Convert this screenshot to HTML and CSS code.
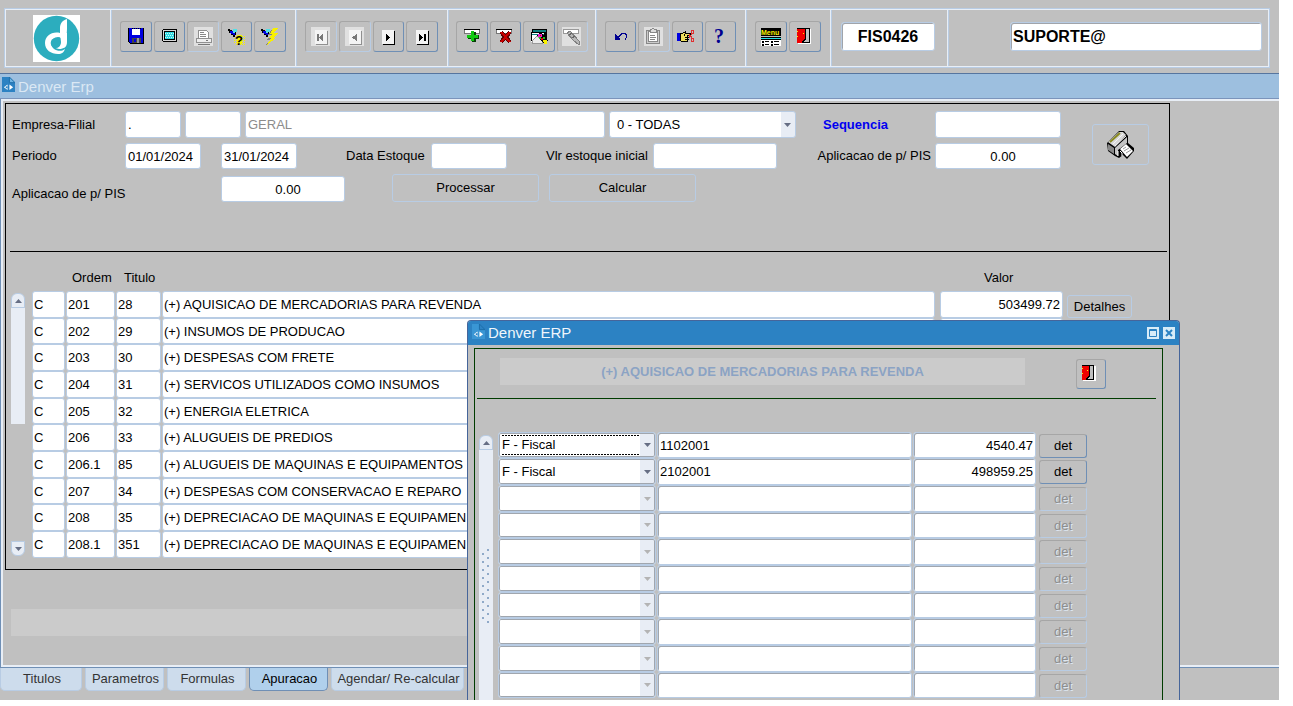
FILE: index.html
```html
<!DOCTYPE html>
<html lang="pt-br">
	<head>
		<meta charset="utf-8" />
		<title>Denver Erp</title>
		<link rel="stylesheet" href="styles.css">
	</head>

	<body>
		<div class="app">

			<header class="toolbar">
				<div class="section logo">
					<svg width="47" height="47" viewBox="0 0 47 47" aria-label="Denver">
						<rect width="47" height="47" fill="#fff"/>
						<circle cx="23.500" cy="23.500" r="22.700" fill="#2cadbe"/>
						<path fill="#fff" d="M34 4C30 5 27 8 27 13V18C19 16 12 21 12 28C12 35 18 39 25 39C29 39 31 37 32 34C27 38 19 35 18 29C18 25 21 22 25 22C28 22 29 24 30 27C33 23 34 19 34 14Z"/>
						<path fill="#fff" d="M27 18H34V27C34 32 31 34 26 34C25 34 23 33 23 33C26 33 28 30 28 27Z"/>
						<circle cx="22.500" cy="28" r="4.800" fill="#2cadbe"/>
					</svg>
				</div>
				<div class="section">
					<button class="tool" aria-label="Salvar">
						<svg class="icon" viewBox="0 0 20 20">
							<path d="M2 1H18V17H4L2 15Z" fill="#000"/>
							<path d="M3 1H17V16H4L3 15Z" fill="#0000e0"/>
							<path d="M6 2H14V8H6Z" fill="#fff"/>
							<path d="M6 1.500H15" stroke="#000" stroke-dasharray="1 1"/>
							<path d="M6 11H15V16H6Z" fill="#444"/>
							<path d="M8 12H10V15H8Z" fill="#0000e0"/>
							<path d="M11 11H13V16H11Z" fill="#999"/>
						</svg>
					</button>
					<button class="tool" aria-label="Tela">
						<svg class="icon" viewBox="0 0 20 20">
							<path d="M4 2H17L18 3V14L17 15H4L3 14V3Z" fill="#000"/>
							<path d="M4 3H17V14H4Z" fill="#d8d8d8"/>
							<path d="M5 4H16V13H5Z" fill="#000"/>
							<path d="M6 5H15V12H6Z" fill="#30d8e0"/>
							<path d="M6 6.500H15M7 8.500H15M6 10.500H15" stroke="#c8f8f8" stroke-dasharray="1 1"/>
						</svg>
					</button>
					<button class="tool" aria-label="Imprimir" disabled>
						<svg class="icon" viewBox="0 0 20 20">
							<path d="M1 0H20V19H1Z" fill="#e0e0e0"/>
							<path d="M5.500 3.500H13.500L15.500 5.500V11.500H5.500Z" fill="#fff" stroke="#909090"/>
							<path d="M7 5.500H11M7 7.500H13M7 9.500H13" stroke="#888"/>
							<path d="M3.500 11.500H18.500V15.500H3.500Z" fill="#eee" stroke="#909090"/>
							<path d="M5 17.500H17M13 13.500H15" stroke="#777"/>
						</svg>
					</button>
					<button class="tool" aria-label="Entrar consulta">
						<svg class="icon" viewBox="0 0 20 20">
							<path d="M7 9.500H18M7 11.500H18M7 13.500H18M7 15.500H18M9 17.500H18" stroke="#f8f000" stroke-width="1" stroke-dasharray="1 1"/>
							<path d="M10 8H15V17H10Z" fill="#f8f000"/>
							<path d="M1 2H3V3H5V4H8V2H10V5H9V8H8V10H6V8H4V6H2V4H1Z" fill="#000"/>
							<path d="M3 4H6V5H8V8H6V7H4V6H3Z" fill="#0000e0"/>
							<path d="M6 2H10V5H8V6H6Z" fill="#50e0e8"/>
							<text class="mark" x="8" y="18">?</text>
						</svg>
					</button>
					<button class="tool" aria-label="Executar consulta">
						<svg class="icon" viewBox="0 0 20 20">
							<path d="M1 2H3V3H5V4H8V2H10V5H9V8H8V10H6V8H4V6H2V4H1Z" fill="#000"/>
							<path d="M3 4H6V5H8V8H6V7H4V6H3Z" fill="#0000e0"/>
							<path d="M6 2H10V5H8V6H6Z" fill="#50e0e8"/>
							<path d="M12 2L8 8H11L7 13H10L6 18L14 12H11L16 7H13L16 2Z" fill="#808080"/>
							<path d="M13 1H18L14 6H18L13 11H16L7 18L11 11H8L12 7H10Z" fill="#f8f000"/>
						</svg>
					</button>
				</div>
				<div class="section">
					<button class="tool" aria-label="Primeiro" disabled>
						<svg class="icon" viewBox="0 0 20 20">
							<path d="M0 0H19V19H0Z" fill="#e0e0e0"/>
							<path d="M5 4H17V18H5Z" fill="#909090"/>
							<path d="M4 3H16V17H4Z" fill="#f4f4f4"/>
							<path d="M6 7H8V14H6ZM12 7V14L8 10.500Z" fill="#777"/>
						</svg>
					</button>
					<button class="tool" aria-label="Anterior" disabled>
						<svg class="icon" viewBox="0 0 20 20">
							<path d="M0 0H19V19H0Z" fill="#e0e0e0"/>
							<path d="M5 4H17V18H5Z" fill="#909090"/>
							<path d="M4 3H16V17H4Z" fill="#f4f4f4"/>
							<path d="M12 7V14L7 10.500Z" fill="#777"/>
						</svg>
					</button>
					<button class="tool" aria-label="Proximo">
						<svg class="icon" viewBox="0 0 20 20">
							<path d="M5 4H17V18H5Z" fill="#000"/>
							<path d="M4 3H16V17H4Z" fill="#f4f4f4"/>
							<path d="M8 7H9V8H10V9H11V10H12V11H11V12H10V13H9V14H8Z" fill="#000"/>
						</svg>
					</button>
					<button class="tool" aria-label="Ultimo">
						<svg class="icon" viewBox="0 0 20 20">
							<path d="M5 4H17V18H5Z" fill="#000"/>
							<path d="M4 3H16V17H4Z" fill="#f4f4f4"/>
							<path d="M7 7H8V8H9V9H10V10H11V11H10V12H9V13H8V14H7ZM12 7H14V14H12Z" fill="#000"/>
						</svg>
					</button>
				</div>
				<div class="section tight">
					<button class="tool" aria-label="Inserir registro">
						<svg class="icon" viewBox="0 0 20 20">
							<path d="M2.500 2.500H17.500V6.500H2.500Z" fill="#fff" stroke="#777"/>
							<path d="M2 2.500H18" stroke="#000"/>
							<path d="M10 5H14V8H17V12H14V15H10V12H6V8H10Z" fill="#064006"/>
							<path d="M9 4H12V8H16V11H12V14H9V11H5V8H9Z" fill="#10c810"/>
						</svg>
					</button>
					<button class="tool" aria-label="Apagar registro">
						<svg class="icon" viewBox="0 0 20 20">
							<path d="M1.500 2.500H16.500V6.500H1.500Z" fill="#fff" stroke="#777"/>
							<path d="M1 2.500H17" stroke="#000"/>
							<path d="M6 5L15 15M15 5L6 15" stroke="#600000" stroke-width="4"/>
							<path d="M6 5L15 15M15 5L6 15" stroke="#c80000" stroke-width="2"/>
						</svg>
					</button>
					<button class="tool" aria-label="Limpar registro">
						<svg class="icon" viewBox="0 0 20 20">
							<path d="M3 2H18V14H3Z" fill="#000"/>
							<path d="M4 3H17V5H4Z" fill="#108080"/>
							<path d="M2 5H15V15H2Z" fill="#fff"/>
							<path d="M2 5H16V6H2ZM2 6H3V14H2Z" fill="#000"/>
							<path d="M3 7H15V8H3Z" fill="#108080"/>
							<path d="M3 14L8 9L13 14V16H3Z" fill="#ececec" stroke="#999"/>
							<path d="M8 8L12 5L19 14L15 17Z" fill="#000"/>
							<path d="M9 7H13V10H9Z" fill="#f020d0"/>
							<path d="M10 10H12V12H10ZM14 10H16V12H14Z" fill="#20c020"/>
							<path d="M11 8H12V9H11ZM12 11H14V13H12Z" fill="#e00000"/>
							<path d="M14 13H18V17H15V15H14Z" fill="#f8f000"/>
						</svg>
					</button>
					<button class="tool" aria-label="Editar" disabled>
						<svg class="icon" viewBox="0 0 20 20">
							<path d="M0 0H19V19H0Z" fill="#e0e0e0"/>
							<path d="M1.500 2.500H16.500V6.500H1.500Z" fill="#fff" stroke="#999"/>
							<path d="M5 6L8 4L18 15L17 18L11 13Z" fill="#b8b8b8" stroke="#808080"/>
							<path d="M7 8L10 6M10 11L13 9" stroke="#666"/>
						</svg>
					</button>
				</div>
				<div class="section">
					<button class="tool" aria-label="Desfazer">
						<svg class="icon" viewBox="0 0 20 20">
							<path d="M4 7H5V8H6V9H7V10H8V11H9V13H4Z" fill="#000090"/>
							<path d="M7 10.500L9 8.500L11 6.500H14L15.500 8V10L14 12.500" stroke="#000090" fill="none"/>
						</svg>
					</button>
					<button class="tool" aria-label="Colar" disabled>
						<svg class="icon" viewBox="0 0 20 20">
							<path d="M0 0H19V19H0Z" fill="#e0e0e0"/>
							<path d="M2.500 3.500H15.500V16.500H2.500Z" fill="#ccc" stroke="#888"/>
							<path d="M4.500 4.500H13.500V14.500H4.500Z" fill="#fff" stroke="#888"/>
							<path d="M6 2H8L9 1L10 2H12V5H6Z" fill="#ddd" stroke="#888"/>
							<path d="M6 8.500H11M6 10.500H12M6 12.500H11" stroke="#888"/>
						</svg>
					</button>
					<button class="tool" aria-label="Lista">
						<svg class="icon" viewBox="0 0 20 20">
							<path d="M0 6H3V14H0Z" fill="#0000e0"/>
							<path d="M3.500 6.500H5.500L8.500 4.500V6.500H13.500V8.500H10.500V14.500H4.500L3.500 13.500Z" fill="#f0e060" stroke="#000"/>
							<path d="M7.500 7V9M8 10.500H12M8 12.500H12" stroke="#000"/>
							<path d="M14.500 3.500H16.500V6.500H14.500ZM14.500 11.500H16.500V14.500H14.500ZM12 11L15 7M12 7L15 11" fill="none" stroke="#e03030"/>
						</svg>
					</button>
					<button class="tool" aria-label="Ajuda">
						<svg class="icon" viewBox="0 0 20 20"><text class="help" x="4" y="16">?</text></svg>
					</button>
				</div>
				<div class="section">
					<button class="tool" aria-label="Menu">
						<svg class="icon" viewBox="0 0 20 20">
							<path d="M0 1H20V9H0Z" fill="#000"/>
							<text class="menu-word" x="0" y="8">Menu</text>
							<path d="M0 10H20V13H0Z" fill="#000"/>
							<path d="M0 11H20V12H0Z" fill="#20e0e8"/>
							<path d="M0 13H20V19H0Z" fill="#fff"/>
							<path d="M1 14H3V16H1ZM4 14H8V15H4ZM10 14H12V16H10ZM13 14H18V15H13ZM1 17H3V19H1ZM4 17H8V18H4ZM10 17H12V19H10ZM13 17H18V18H13Z" fill="#000"/>
						</svg>
					</button>
					<button class="tool" aria-label="Sair">
						<svg class="icon" viewBox="0 0 20 20">
							<path d="M3 2H16V17H3Z" fill="#fff"/>
							<path d="M2.500 1.500H14.500V15.500H2.500Z" fill="#c0c0c0" stroke="#000"/>
							<path d="M2 2H10V12L6 16H2Z" fill="#f00000"/>
							<path d="M10.500 2V12L7 15.500" stroke="#000" fill="none"/>
							<path d="M8 6H9V7H8ZM2 4H3V5H2ZM2 9H3V10H2Z" fill="#f8f000"/>
						</svg>
					</button>
				</div>
				<div class="section code-box">
					<input class="field head-field code" value="FIS0426" aria-label="Programa">
				</div>
				<div class="section user">
					<input class="field head-field" value="SUPORTE@" aria-label="Usuario">
				</div>
			</header>

			<div class="titlebar">
				<svg class="doc" viewBox="0 0 14 16">
					<path d="M0 0H8L14 6V16H0Z" fill="#2c82c3"/>
					<path d="M8 0L14 6H8Z" fill="#6fb4e4" stroke="#1b6ca8"/>
					<path d="M6 8L2 11L6 14ZM8 8L12 11L8 14Z" fill="#fff"/>
					<path d="M4 10H6V12H4Z" fill="#2c82c3"/>
				</svg>
				<span>Denver Erp</span>
			</div>

			<main class="canvas">
				<section class="frame">
					<form class="form">
						<div class="rows">
							<div class="row">
								<label class="lead" for="empresa">Empresa-Filial</label>
								<input class="field w56" id="empresa" value=".">
								<input class="field w56" aria-label="Filial">
								<input class="field grow muted" value="GERAL" aria-label="Nome">
								<select class="field combo todas" aria-label="Tipo"><option>0 - TODAS</option></select>
								<label class="seq" for="sequencia">Sequencia</label>
								<input class="field w126" id="sequencia">
							</div>
							<div class="row">
								<label class="lead" for="inicio">Periodo</label>
								<input class="field w76" id="inicio" value="01/01/2024">
								<input class="field w76 until" value="31/01/2024" aria-label="Periodo final">
								<label class="stock-date" for="estoque">Data Estoque</label>
								<input class="field w76" id="estoque">
								<label class="stock-value" for="vlr">Vlr estoque inicial</label>
								<input class="field w124" id="vlr">
								<label class="push" for="pis">Aplicacao de p/ PIS</label>
								<input class="field w126 center" id="pis" value="0.00">
							</div>
							<div class="row last">
								<label class="lead wide" for="aplicacao">Aplicacao de p/ PIS</label>
								<input class="field w124 center" id="aplicacao" value="0.00">
								<button type="button" class="flat first">Processar</button>
								<button type="button" class="flat">Calcular</button>
							</div>
						</div>
						<button type="button" class="print" aria-label="Imprimir apuracao">
							<svg width="30" height="30" viewBox="0 0 30 30">
								<path d="M1 13L13 1L18 1L22 6V13L28 18V21L21 29L17 25L13 28L9 26L2 21Z" fill="#000"/>
								<path d="M2 12L13 2L17 2L20 5L9 17Z" fill="#d8d8d8"/>
								<path d="M4 12L14 3" stroke="#8a8a20" stroke-width="2"/>
								<path d="M7 14L17 4M9 16L20 6" stroke="#f4f4f4"/>
								<path d="M2 14L8 18V24L2 20Z" fill="#888"/>
								<path d="M9 18L21 7V13L12 20V26L9 24Z" fill="#c4c4c4"/>
								<path d="M14 19L20 14L27 21L21 27Z" fill="#fff"/>
								<path d="M17 19L20 17M18 21L23 18M20 23L25 20" stroke="#999"/>
								<path d="M14 21L16 23V26M12 21V26" stroke="#fff" fill="none"/>
							</svg>
						</button>
					</form>

					<hr class="rule">

					<div class="list">
						<div class="scroll">
							<button class="cap up" aria-label="Subir"></button>
							<div class="track"></div>
							<button class="cap down" aria-label="Descer"></button>
						</div>
						<table class="entries">
							<thead>
								<tr>
									<th class="c-type"></th>
									<th class="c-order">Ordem</th>
									<th class="c-title">Titulo</th>
									<th></th>
									<th class="c-value">Valor</th>
									<th class="c-action"></th>
								</tr>
							</thead>
							<tbody id="entries"></tbody>
						</table>
					</div>
				</section>
				<div class="status"></div>
			</main>

			<nav class="tabs">
				<button class="tab t-titulos">Titulos</button>
				<button class="tab">Parametros</button>
				<button class="tab">Formulas</button>
				<button class="tab active">Apuracao</button>
				<button class="tab t-agendar">Agendar/ Re-calcular</button>
			</nav>

			<section class="modal">
				<div class="modal-bar">
					<svg class="doc" viewBox="0 0 14 16">
						<path d="M0 0H8L14 6V16H0Z" fill="#3a96d4"/>
						<path d="M8 0L14 6H8Z" fill="#2c82c3" stroke="#1b6ca8"/>
						<path d="M6 8L2 11L6 14ZM8 8L12 11L8 14Z" fill="#fff"/>
						<path d="M4 10H6V12H4Z" fill="#2c82c3"/>
					</svg>
					<span>Denver ERP</span>
					<button class="win first" aria-label="Maximizar">
						<svg width="12" height="12" viewBox="0 0 12 12"><path d="M2.500 2.500H9.500V9.500H2.500ZM2 3.500H10" fill="none" stroke="#2c82c3"/></svg>
					</button>
					<button class="win" aria-label="Fechar">
						<svg width="12" height="12" viewBox="0 0 12 12"><path d="M3 3L9 9M9 3L3 9" stroke="#2c82c3" stroke-width="2"/></svg>
					</button>
				</div>
				<div class="modal-body">
					<div class="modal-head">
						<div class="caption">(+) AQUISICAO DE MERCADORIAS PARA REVENDA</div>
						<button class="tool leave" aria-label="Sair da consulta">
							<svg class="icon" viewBox="0 0 20 20">
								<path d="M2 2H15V17H2Z" fill="#fff"/>
								<path d="M1.500 1.500H12.500V15.500H1.500Z" fill="#c0c0c0" stroke="#000"/>
								<path d="M1 2H8V12L4 16H1Z" fill="#f00000"/>
								<path d="M8.500 2V12L5 15.500" stroke="#000" fill="none"/>
								<path d="M6 6H7V7H6ZM1 4H2V5H1ZM1 9H2V10H1Z" fill="#f8f000"/>
							</svg>
						</button>
					</div>
					<hr class="rule green">
					<div class="modal-list">
						<div class="scroll">
							<button class="cap up" aria-label="Subir itens"></button>
							<div class="track full"><div class="grip"></div></div>
						</div>
						<table class="details">
							<tbody id="details"></tbody>
						</table>
					</div>
				</div>
			</section>
		</div>

		<script>
			var entries = [
				["201","28","(+) AQUISICAO DE MERCADORIAS PARA REVENDA","503499.72"],
				["202","29","(+) INSUMOS DE PRODUCAO",""],
				["203","30","(+) DESPESAS COM FRETE",""],
				["204","31","(+) SERVICOS UTILIZADOS COMO INSUMOS",""],
				["205","32","(+) ENERGIA ELETRICA",""],
				["206","33","(+) ALUGUEIS DE PREDIOS",""],
				["206.1","85","(+) ALUGUEIS DE MAQUINAS E EQUIPAMENTOS",""],
				["207","34","(+) DESPESAS COM CONSERVACAO E REPARO",""],
				["208","35","(+) DEPRECIACAO DE MAQUINAS E EQUIPAMEN",""],
				["208.1","351","(+) DEPRECIACAO DE MAQUINAS E EQUIPAMEN",""]
			];
			var details = [["1102001","4540.47"],["2102001","498959.25"]];

			function cell(value,label,cls,tdCls){
				return '<td class="' + (tdCls || '') + '"><input class="field ' + (cls || '') + '" value="' + value + '" aria-label="' + label + '"></td>';
			}

			document.getElementById("entries").innerHTML = entries.map(function (e,i){
				return '<tr>' + cell("C","Classe") + cell(e[0],"Ordem") + cell(e[1],"Titulo") + cell(e[2],"Descricao")
					+ cell(e[3],"Valor","right","value")
					+ '<td class="action">' + (i == 0 ? '<button class="flat detail">Detalhes</button>' : '') + '</td></tr>';
			}).join("");

			var html = "";
			for(var i = 0; i < 10; i++){
				var d = details[i];
				var off = d ? '' : ' disabled';
				html += '<tr><td class="d-kind"><select class="field combo' + (i == 0 ? ' current' : '') + '" aria-label="Origem"' + off + '>'
					+ '<option>' + (d ? 'F - Fiscal' : '') + '</option></select></td>'
					+ cell(d ? d[0] : '',"CFOP")
					+ cell(d ? d[1] : '',"Valor item","right","d-value")
					+ '<td class="d-action"><button class="tool det"' + off + '>det</button></td></tr>';
			}
			document.getElementById("details").innerHTML = html;
		</script>
	</body>
</html>
```
FILE: styles.css
```css
*{
	box-sizing: border-box;
}
body {
	margin: 0;
	background-color: #fff;
	font: 13px/16px "Liberation Sans", Arial, sans-serif;
	color: #000;
}
button, input, select {
	font: inherit;
	color: inherit;
	margin: 0;
	padding: 0;
}
svg {
	display: block;
}
.app {
	position: relative;
	display: flex;
	flex-direction: column;
	height: calc(100vh - 6px);
	margin-right: 14px;
	overflow: hidden;
	background-color: #c0c0c0;
}

/* toolbar */
.toolbar {
	display: grid;
	grid-template-columns: 104px 185px 152px 148px 150px 85px 117px 1fr;
	height: 60px;
	margin: 8px 9px 5px 4px;
	border: 1px solid #b8cce4;
	box-shadow: inset 0 0 0 1px #e8eef6;
	padding: 1px;
	flex: none;
}
.section {
	display: flex;
	align-items: flex-start;
	gap: 2px;
	padding: 11px 9px 0;
	border-left: 1px solid #e8eef6;
	box-shadow: inset 1px 0 #b8cce4;
}
.section.tight {
	padding: 11px 7px 0 8px;
}
.section.logo {
	padding: 5px 0 0 27px;
	border: 0;
	box-shadow: none;
}
.section.code-box {
	padding: 12px 12px 0 10px;
}
.section.user {
	padding: 12px 6px 0 62px;
}
.tool {
	display: flex;
	flex: 1;
	align-items: center;
	justify-content: center;
	height: 31px;
	background: none;
	border: 1px solid;
	border-color: #a6a6a6 #6f8fb5 #6f8fb5 #a6a6a6;
	border-radius: 3px;
}
.tool:disabled {
	border-color: #a6a6a6 #b8cce4 #b8cce4 #a6a6a6;
}
.icon {
	flex: none;
	width: 20px;
	height: 20px;
	shape-rendering: crispEdges;
}
.mark {
	font: bold 13px "Liberation Sans", sans-serif;
}
.help {
	font: bold 20px "Liberation Serif", serif;
	fill: #000090;
}
.menu-word {
	font: bold 7px "Liberation Sans", sans-serif;
	fill: #f8f000;
}

/* fields */
.field {
	height: 26px;
	min-width: 0;
	padding: 0 2px;
	background-color: #fff;
	border: 1px solid #b8cce4;
	border-radius: 3px;
	outline: none;
}
.head-field {
	flex: 1;
	height: 29px;
	font-size: 16px;
	font-weight: bold;
	box-shadow: inset 1px 1px #a0a4aa;
}
.code {
	text-align: center;
}
.combo {
	appearance: none;
	padding: 0 18px 0 3px;
	background-image:
		url("data:image/svg+xml,%3Csvg xmlns='http://www.w3.org/2000/svg' width='7' height='4'%3E%3Cpath d='M0 0H7L3.500 4Z' fill='%23666e84'/%3E%3C/svg%3E"),
		linear-gradient(#e8edf5, #e8edf5);
	background-repeat: no-repeat;
	background-position: right 4px center, right 0 center;
	background-size: 7px 4px, 14px 100%;
}
.combo:disabled {
	opacity: 1;
	background-image:
		url("data:image/svg+xml,%3Csvg xmlns='http://www.w3.org/2000/svg' width='7' height='4'%3E%3Cpath d='M0 0H7L3.500 4Z' fill='%23b4b4b4'/%3E%3C/svg%3E"),
		linear-gradient(#e8edf5, #e8edf5);
}
.w56 { width: 56px; }
.w76 { width: 76px; }
.w124 { width: 124px; }
.w126 { width: 126px; }
.grow { flex: 1; }
.muted { color: #8c8c8c; }
.center {
	padding-left: 12px;
	text-align: center;
}
.right { text-align: right; }

/* main window */
.titlebar {
	display: flex;
	flex: none;
	align-items: center;
	gap: 3px;
	height: 26px;
	padding-left: 2px;
	background-color: #9dbfdf;
	border-top: 1px solid #56759f;
	border-bottom: 1px solid #7b94bb;
	font-size: 15px;
	color: #dbe8f4;
}
.titlebar span {
	padding-top: 2px;
}
.doc {
	width: 13px;
	height: 15px;
	margin-bottom: 4px;
}
.canvas {
	flex: 1;
	min-height: 0;
	padding: 2px 109px 0 2px;
	border: 1px solid #6f8fb5;
	border-width: 0 0 1px 1px;
	box-shadow: inset 2px -2px #e8eef6, inset 0 2px #e8eef6;
}
.frame {
	margin: 2px 0 0 2px;
	padding: 7px 0 11px;
	border: 1px solid #000;
}
.form {
	display: flex;
	gap: 31px;
	padding: 0 20px 0 6px;
}
.rows {
	display: flex;
	flex: 1;
	flex-direction: column;
	gap: 5px;
}
.row {
	display: flex;
	align-items: center;
	gap: 4px;
}
.row:first-child .field {
	height: 27px;
}
.row.last {
	align-items: flex-end;
}
.lead {
	width: 109px;
}
.lead.wide {
	width: 205px;
}
.seq {
	width: 108px;
	margin-left: 23px;
	font-weight: bold;
	color: #0000f0;
}
.todas {
	width: 187px;
	padding-left: 7px;
}
.until {
	margin-left: 16px;
}
.stock-date {
	width: 81px;
	margin-left: 45px;
}
.stock-value {
	width: 103px;
	margin-left: 35px;
}
.push {
	margin-left: auto;
}
.flat {
	width: 147px;
	height: 28px;
	background: none;
	border: 1px solid #b8cce4;
	border-radius: 3px;
}
.flat.first {
	margin: 0 6px 0 43px;
}
.print {
	display: flex;
	align-items: center;
	justify-content: center;
	width: 57px;
	height: 41px;
	margin-top: 13px;
	background: none;
	border: 1px solid #b8cce4;
	border-radius: 3px;
}
.rule {
	height: 1px;
	margin: 49px 2px 0 4px;
	border: 0;
	background-color: #000;
}

/* entries */
.list {
	display: flex;
	gap: 7px;
	margin-top: 13px;
	padding: 0 37px 0 5px;
}
.scroll {
	display: flex;
	flex: none;
	flex-direction: column;
	width: 14px;
}
.list .scroll {
	padding: 28px 0 2px;
}
.cap {
	flex: none;
	height: 15px;
	background: #e8edf5 url("data:image/svg+xml,%3Csvg xmlns='http://www.w3.org/2000/svg' width='7' height='4'%3E%3Cpath d='M0 4H7L3.500 0Z' fill='%23666e84'/%3E%3C/svg%3E") no-repeat center;
	border: 1px solid #b8cce4;
	border-radius: 6px 6px 0 0;
}
.cap.down {
	margin-top: auto;
	background-image: url("data:image/svg+xml,%3Csvg xmlns='http://www.w3.org/2000/svg' width='7' height='4'%3E%3Cpath d='M0 0H7L3.500 4Z' fill='%23666e84'/%3E%3C/svg%3E");
	border-radius: 0 0 6px 6px;
}
.track {
	height: 116px;
	background-color: #e8edf5;
}
table {
	flex: 1;
	border-collapse: collapse;
	table-layout: fixed;
}
th {
	height: 26px;
	padding: 0;
	font-weight: normal;
	text-align: left;
}
td {
	height: 27px;
	padding: 0 1px 0 0;
}
td .field {
	display: block;
	width: 100%;
	height: 27px;
}
.entries .field {
	padding: 0 2px 0 1px;
}
.entries tr:nth-child(3n+2) td,
.entries tr:nth-child(3n+2) .field,
.details tr:nth-child(3n+1) td,
.details tr:nth-child(3n+1) .field {
	height: 26px;
}
.c-type { width: 34px; }
.c-order { width: 50px; padding-left: 6px; }
.c-title { width: 46px; padding-left: 8px; }
.c-value { width: 128px; padding-left: 48px; }
.c-action { width: 68px; }
td.value {
	padding-left: 4px;
}
td.action {
	padding: 4px 0 0 3px;
}
.detail {
	display: block;
	width: 65px;
	height: 23px;
}
.status {
	height: 27px;
	margin: 39px 0 0 8px;
	background-color: #cbcbcb;
}

/* tabs */
.tabs {
	display: flex;
	flex: none;
	gap: 3px;
	height: 32px;
}
.tab {
	width: 79px;
	height: 23px;
	padding-left: 2px;
	background-color: #cddcec;
	border: 1px solid #b8cce4;
	border-top: 0;
	border-radius: 0 0 5px 5px;
	color: #333;
}
.t-titulos {
	width: 82px;
}
.t-agendar {
	width: 133px;
}
.tab.active {
	background-color: #b0d0ec;
	border-color: #6f8fb5;
	color: #000;
}

/* detail window, floats over the canvas */
.modal {
	position: absolute;
	top: 320px;
	right: 99px;
	bottom: 0;
	left: 467px;
	display: flex;
	flex-direction: column;
	background-color: #c0c0c0;
	border: 1px solid #46659a;
	border-bottom: 0;
	border-radius: 4px 4px 0 0;
	overflow: hidden;
}
.modal-bar {
	display: flex;
	flex: none;
	align-items: center;
	gap: 3px;
	height: 24px;
	padding: 0 4px;
	background-color: #2c82c3;
	font-size: 15px;
	color: #f0f6fc;
}
.win {
	width: 12px;
	height: 12px;
	border: 0;
	background-color: #d8ecf8;
}
.win.first {
	margin: 0 1px 0 auto;
}
.modal-body {
	display: flex;
	flex: 1;
	flex-direction: column;
	margin: 3px 16px 0 6px;
	border: 1px solid #003c00;
	border-bottom: 0;
}
.modal-head {
	display: flex;
	gap: 51px;
	padding: 9px 56px 0 25px;
}
.caption {
	flex: 1;
	height: 27px;
	background-color: #cbcbcb;
	font-weight: bold;
	line-height: 27px;
	text-align: center;
	color: #8ba3c4;
}
.leave {
	flex: none;
	width: 30px;
	height: 30px;
	margin-top: 1px;
}
.rule.green {
	flex: none;
	margin: 9px 6px 0 2px;
	background-color: #003c00;
}
.modal-list {
	display: flex;
	flex: 1;
	gap: 5px;
	padding: 33px 75px 0 4px;
}
.modal-list .scroll {
	padding-top: 3px;
}
.track.full {
	flex: 1;
	padding: 98px 2px 0;
}
.grip {
	height: 76px;
	background-image: radial-gradient(circle at 2px 6px, #8fa9c8 1px, transparent 1px), radial-gradient(circle at 7px 2px, #8fa9c8 1px, transparent 1px);
	background-size: 10px 8px;
}
.details {
	align-self: flex-start;
}
.details .field {
	box-shadow: inset 1px 1px #a0a6ae;
}
.details .combo {
	box-shadow: inset 0 0 0 1px #a0a6ae;
	background-position: right 4px center, right 1px center;
}
.details .combo.current {
	background-image:
		url("data:image/svg+xml,%3Csvg xmlns='http://www.w3.org/2000/svg' width='7' height='4'%3E%3Cpath d='M0 0H7L3.500 4Z' fill='%23666e84'/%3E%3C/svg%3E"),
		linear-gradient(#e8edf5, #e8edf5),
		repeating-linear-gradient(90deg, #000 0 2px, transparent 2px 3px),
		repeating-linear-gradient(90deg, #000 0 2px, transparent 2px 3px);
	background-position: right 4px center, right 1px center, 3px 2px, 3px 21px;
	background-size: 7px 4px, 14px 100%, 137px 1px, 137px 1px;
}
.d-kind { width: 159px; }
.d-value { width: 124px; }
.d-action { width: 50px; padding: 1px 0 0 2px; }
.det {
	width: 100%;
	height: 24px;
}
.det:disabled {
	color: #8e8e8e;
	text-shadow: 1px 1px #dde6f0;
}
```
